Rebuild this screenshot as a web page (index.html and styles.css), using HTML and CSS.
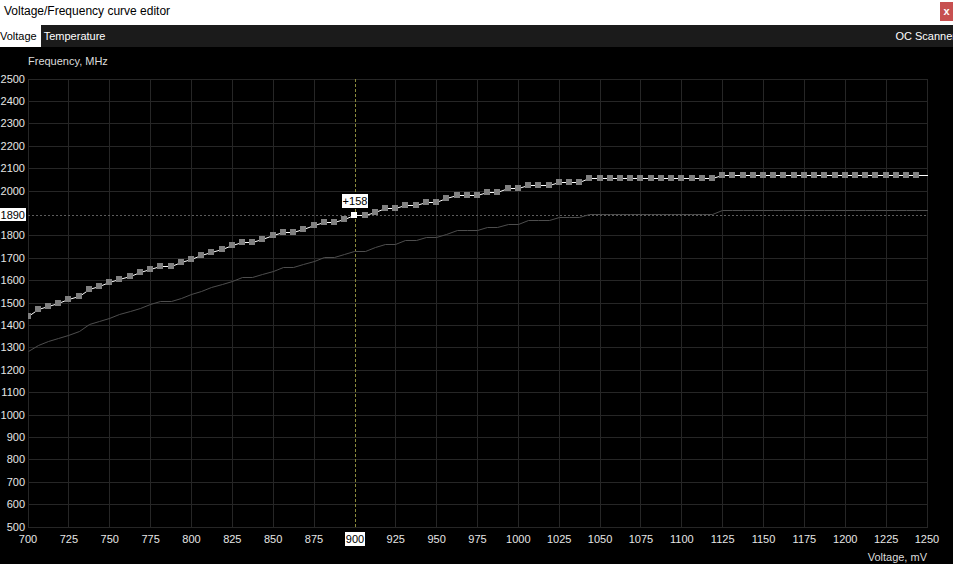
FILE: index.html
```html
<!DOCTYPE html>
<html lang="en">
<head>
  <meta charset="UTF-8" />
  <meta name="viewport" content="width=device-width, initial-scale=1.0"/>
  <title>Voltage/Frequency curve editor</title>
  <link rel="stylesheet" href="styles.css">
</head>
<body>

<div class="title-bar">
  <span class="title">Voltage/Frequency curve editor</span>
  <button type="button" class="close-btn">x</button>
</div>

<div class="tab-bar">
  <span class="tab active">Voltage</span>
  <span class="tab">Temperature</span>
  <span class="tab tab-right">OC Scanner</span>
</div>

<svg id="curve" class="curve" width="953" height="517" viewBox="0 47 953 517"></svg>

<script>
  const NS = 'http://www.w3.org/2000/svg';
  const svg = document.getElementById('curve');

  const plot = { left: 28, top: 79, right: 927, bottom: 527 };
  const vMin = 700, vMax = 1250, fMin = 500, fMax = 2500;
  const vStep = 6.25;
  const offset = 158;
  const selected = 32;

  // MHz per point, one point every 6.25 mV from 700 mV
  const freqs = [
    1440, 1470, 1485, 1500, 1515, 1530, 1560, 1575, 1590, 1605,
    1620, 1635, 1650, 1665, 1665, 1680, 1695, 1710, 1725, 1740,
    1755, 1770, 1770, 1785, 1800, 1815, 1815, 1830, 1845, 1860,
    1860, 1875, 1890, 1890, 1905, 1920, 1920, 1935, 1935, 1950,
    1950, 1965, 1980, 1980, 1980, 1995, 1995, 2010, 2010, 2025,
    2025, 2025, 2040, 2040, 2040
  ];
  while (freqs.length < 68) freqs.push(2055);
  while (freqs.length < 88) freqs.push(2070);

  const xs = v => plot.left + (v - vMin) * (plot.right - plot.left) / (vMax - vMin);
  const ys = f => plot.top + (fMax - f) * (plot.bottom - plot.top) / (fMax - fMin);
  const px = n => Math.floor(n) + 0.5;

  function add(tag, attrs, text, parent) {
    const node = document.createElementNS(NS, tag);
    for (const k in attrs) node.setAttribute(k, attrs[k]);
    if (text != null) node.textContent = text;
    (parent || svg).appendChild(node);
    return node;
  }

  const selV = vMin + selected * vStep;
  const selF = freqs[selected];

  // grid
  let grid = '';
  for (let v = vMin; v <= vMax; v += 25) {
    if (v === selV) continue;
    grid += `M${px(xs(v))} ${plot.top}V${plot.bottom + 1}`;
  }
  for (let f = fMin; f <= fMax; f += 100) {
    if (Math.abs(ys(f) - ys(selF)) < 8) continue;
    grid += `M${plot.left} ${px(ys(f))}H${plot.right + 1}`;
  }
  add('path', { d: grid, class: 'grid' });

  // axis labels
  add('text', { x: 28, y: 65, class: 'axis-title' }, 'Frequency, MHz');
  add('text', { x: 927, y: 561, class: 'axis-title', 'text-anchor': 'end' }, 'Voltage, mV');

  for (let f = fMin; f <= fMax; f += 100) {
    if (Math.abs(ys(f) - ys(selF)) < 12) continue;
    add('text', { x: 25, y: Math.floor(ys(f)) + 4, class: 'tick', 'text-anchor': 'end' }, f);
  }
  for (let v = vMin; v <= vMax; v += 25) {
    if (Math.abs(xs(v) - xs(selV)) < 20) continue;
    add('text', { x: xs(v), y: 543, class: 'tick', 'text-anchor': 'middle' }, v);
  }

  // crosshair on the selected point
  const cx = Math.round(xs(selV)) + 0.5;
  const cy = px(ys(selF));
  add('line', { x1: cx, y1: plot.top, x2: cx, y2: plot.bottom + 1, class: 'cross-v' });
  add('line', { x1: plot.left, y1: cy, x2: plot.right + 1, y2: cy, class: 'cross-h' });

  // curves
  const defs = add('defs', {});
  const clip = add('clipPath', { id: 'plot-clip' }, null, defs);
  add('rect', { x: plot.left, y: plot.top, width: plot.right - plot.left + 1, height: plot.bottom - plot.top + 1 }, null, clip);
  const layer = add('g', { 'clip-path': 'url(#plot-clip)' });

  const pts = shift => {
    const list = freqs.map((f, i) => `${px(xs(vMin + i * vStep))},${px(ys(f - shift))}`);
    list.push(`${plot.right + 1},${px(ys(freqs[freqs.length - 1] - shift))}`);
    return list.join(' ');
  };
  add('polyline', { points: pts(offset), class: 'curve-base' }, null, layer);
  add('polyline', { points: pts(0), class: 'curve-line' }, null, layer);

  freqs.forEach((f, i) => {
    add('rect', {
      x: Math.floor(xs(vMin + i * vStep)) - 3,
      y: Math.floor(ys(f)) - 3,
      width: 6, height: 6,
      class: i === selected ? 'point selected' : 'point'
    }, null, layer);
  });

  // highlighted values
  const fy = Math.floor(ys(selF));
  add('rect', { x: 0, y: fy - 7, width: 26, height: 13, class: 'hl-box' });
  add('text', { x: 25, y: fy + 4, class: 'hl-text', 'text-anchor': 'end' }, selF);

  const vx = Math.round(xs(selV));
  add('rect', { x: vx - 10, y: 532, width: 20, height: 14, class: 'hl-box' });
  add('text', { x: vx, y: 543, class: 'hl-text', 'text-anchor': 'middle' }, selV);

  add('rect', { x: vx - 13, y: fy - 21, width: 26, height: 14, class: 'hl-box' });
  add('text', { x: vx, y: fy - 10, class: 'hl-text', 'text-anchor': 'middle' }, '+' + offset);
</script>

</body>
</html>
```

FILE: styles.css
```css
body {
  margin: 0;
  width: 953px;
  height: 564px;
  overflow: hidden;
  background: #000;
  font-family: "Liberation Sans", Arial, sans-serif;
}

.title-bar {
  display: flex;
  align-items: flex-start;
  height: 25px;
  background: #fff;
  overflow: hidden;
}
.title {
  padding: 4px 0 0 4px;
  font-size: 12px;
  line-height: 14px;
  color: #000;
}
.close-btn {
  margin: 2px -5px 0 auto;
  width: 18px;
  height: 19px;
  padding: 0 5px 0 0;
  border: 0;
  background: #c75050;
  color: #fff;
  font: bold 11px "Liberation Sans", Arial, sans-serif;
  line-height: 17px;
}

.tab-bar {
  display: flex;
  height: 22px;
  background: #1b1b1b;
  overflow: hidden;
}
.tab {
  padding: 0 3px;
  font-size: 11px;
  line-height: 22px;
  color: #fff;
  white-space: nowrap;
}
.tab.active {
  padding: 0 4px 0 0;
  background: #fff;
  color: #000;
}
.tab-right { margin: 0 -6px 0 auto; }

.curve { display: block; }

.grid { stroke: #262626; stroke-width: 1; fill: none; }
.tick, .axis-title { fill: #e6e6e6; font-size: 11px; font-family: "Liberation Sans", Arial, sans-serif; }
.axis-title { fill: #dcdcdc; }
.cross-v { stroke: #8a8a3c; stroke-width: 1; stroke-dasharray: 3 2; }
.cross-h { stroke: #5c5c5c; stroke-width: 1; stroke-dasharray: 2 2; }
.curve-base { fill: none; stroke: #4e4e4e; stroke-width: 1; }
.curve-line { fill: none; stroke: #fff; stroke-width: 1; }
.point { fill: #808080; }
.point.selected { fill: #fff; }
.hl-box { fill: #fff; }
.hl-text { fill: #000; font-size: 11px; font-family: "Liberation Sans", Arial, sans-serif; }
```
